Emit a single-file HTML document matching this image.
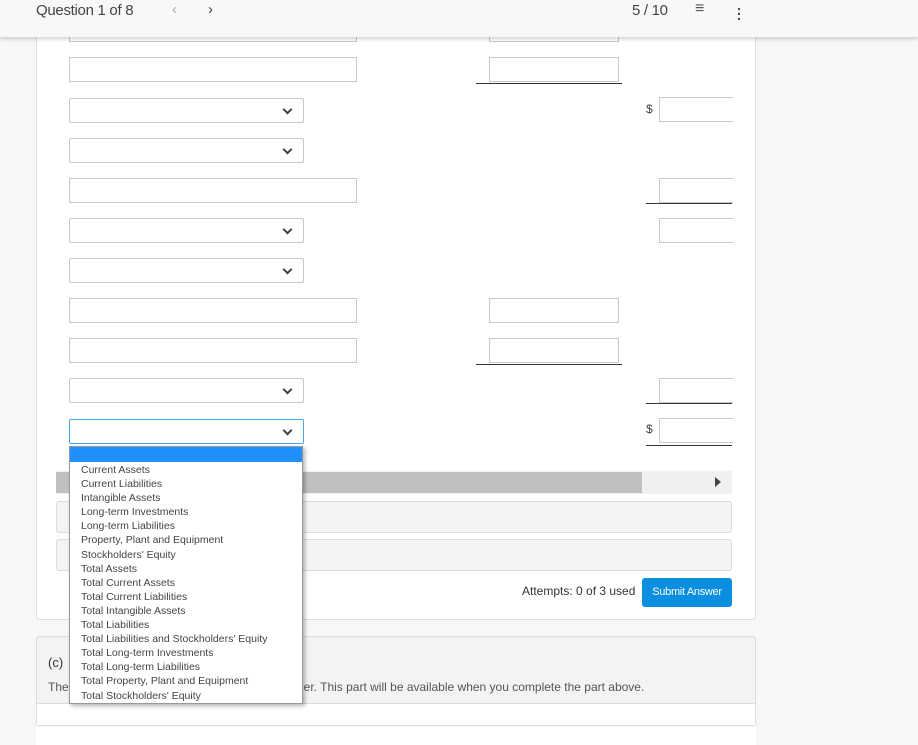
<!DOCTYPE html>
<html><head><meta charset="utf-8"><style>
*{box-sizing:border-box;margin:0;padding:0}
body{width:918px;height:745px;overflow:hidden;background:#f7f7f7;font-family:"Liberation Sans",sans-serif;position:relative;color:#333}
.a{position:absolute}
.hdr{left:0;top:0;width:918px;height:37px;background:#f8f8f8;box-shadow:0 2px 4px rgba(0,0,0,.18);z-index:5}
.card{left:36px;top:0;width:720px;height:620px;background:#fff;border:1px solid #ddd;border-top:none;border-radius:0 0 3px 3px}
.in{background:#fff;border:1px solid #c8c8c8;height:25px}
.sel{border-radius:2px}
.sel:after{content:"";position:absolute;right:12px;top:7px;width:5px;height:5px;border-right:2px solid #444;border-bottom:2px solid #444;transform:rotate(45deg)}
.ul{height:1px;background:#333}
.d{font-size:12px;color:#444}
.box{left:56px;width:676px;height:32px;background:#f4f4f4;border:1px solid #ddd;border-radius:3px}
.dd{left:69px;top:446px;width:234px;height:258px;background:#fff;border:1px solid #999;box-shadow:2px 2px 4px rgba(0,0,0,.3);z-index:6;font-size:10.5px;color:#444}
.dd div{height:14.1px;line-height:14px;padding-left:11px;white-space:nowrap}
</style></head><body>
<div class="a hdr">
<div class="a" style="left:36px;top:2px;font-size:15px;color:#444;letter-spacing:-.3px">Question 1 of 8</div>
<div class="a" style="left:172px;top:1px;font-size:15px;color:#aaa">&lsaquo;</div>
<div class="a" style="left:208px;top:1px;font-size:15px;color:#444">&rsaquo;</div>
<div class="a" style="left:632px;top:2px;font-size:15px;color:#444;letter-spacing:-.3px">5 / 10</div>
<div class="a" style="left:695px;top:0px;font-size:16px;color:#555">&#8801;</div>
<div class="a" style="left:737px;top:3px;font-size:14px;font-weight:bold;color:#444;line-height:5px">.<br>.<br>.</div>
</div>
<div class="a card"></div>
<div class="a in" style="left:69px;top:17px;width:288px"></div>
<div class="a in" style="left:69px;top:57px;width:288px"></div>
<div class="a in sel" style="left:69px;top:98px;width:235px"></div>
<div class="a in sel" style="left:69px;top:138px;width:235px"></div>
<div class="a in" style="left:69px;top:178px;width:288px"></div>
<div class="a in sel" style="left:69px;top:218px;width:235px"></div>
<div class="a in sel" style="left:69px;top:258px;width:235px"></div>
<div class="a in" style="left:69px;top:298px;width:288px"></div>
<div class="a in" style="left:69px;top:338px;width:288px"></div>
<div class="a in sel" style="left:69px;top:378px;width:235px"></div>
<div class="a in sel" style="left:69px;top:419px;width:235px;border-color:#4da3ea"></div>
<div class="a in" style="left:489px;top:17px;width:130px"></div>
<div class="a in" style="left:489px;top:57px;width:130px"></div>
<div class="a ul" style="left:476px;top:83px;width:146px"></div>
<div class="a d" style="left:646px;top:102px">$</div>
<div class="a in" style="left:659px;top:97px;width:80px"></div>
<div class="a in" style="left:659px;top:178px;width:80px"></div>
<div class="a ul" style="left:646px;top:203px;width:86px"></div>
<div class="a in" style="left:659px;top:218px;width:80px"></div>
<div class="a in" style="left:489px;top:298px;width:130px"></div>
<div class="a in" style="left:489px;top:338px;width:130px"></div>
<div class="a ul" style="left:476px;top:364px;width:146px"></div>
<div class="a in" style="left:659px;top:378px;width:80px"></div>
<div class="a ul" style="left:646px;top:403px;width:86px"></div>
<div class="a d" style="left:646px;top:422px">$</div>
<div class="a in" style="left:659px;top:418px;width:80px"></div>
<div class="a ul" style="left:646px;top:445px;width:86px"></div>
<div class="a" style="left:733px;top:0;width:22px;height:460px;background:#fff"></div>
<div class="a" style="left:56px;top:471px;width:676px;height:23px;background:#f0f0f0"></div>
<div class="a" style="left:56px;top:472px;width:586px;height:21px;background:#c0c0c0"></div>
<div class="a" style="left:715px;top:477px;width:0;height:0;border-left:6px solid #444;border-top:5px solid transparent;border-bottom:5px solid transparent"></div>
<div class="a box" style="top:501px"></div>
<div class="a box" style="top:539px"></div>
<div class="a" style="left:522px;top:584px;font-size:12px;color:#333">Attempts: 0 of 3 used</div>
<div class="a" style="left:642px;top:578px;width:90px;height:29px;background:#0a8ee0;border-radius:3px;color:#fff;font-size:11px;text-align:center;line-height:29px;letter-spacing:-.3px">Submit Answer</div>
<div class="a" style="left:36px;top:636px;width:720px;height:90px;background:#f3f3f3;border:1px solid #ddd;border-radius:3px"></div>
<div class="a" style="left:37px;top:703px;width:718px;height:22px;background:#fff;border-top:1px solid #ddd"></div>
<div class="a" style="left:48px;top:655px;font-size:13px;color:#333">(c)</div>
<div class="a" style="left:48px;top:680px;font-size:12px;color:#555">The</div>
<div class="a" style="left:293px;top:680px;font-size:12px;color:#555">rder. This part will be available when you complete the part above.</div>
<div class="a" style="left:36px;top:727px;width:720px;height:18px;background:#fff"></div>
<div class="a dd">
<div style="background:#1e90ff;height:15px"></div>
<div style="margin-top:1px">Current Assets</div><div>Current Liabilities</div><div>Intangible Assets</div><div>Long-term Investments</div><div>Long-term Liabilities</div><div>Property, Plant and Equipment</div><div>Stockholders' Equity</div><div>Total Assets</div><div>Total Current Assets</div><div>Total Current Liabilities</div><div>Total Intangible Assets</div><div>Total Liabilities</div><div>Total Liabilities and Stockholders' Equity</div><div>Total Long-term Investments</div><div>Total Long-term Liabilities</div><div>Total Property, Plant and Equipment</div><div>Total Stockholders' Equity</div>
</div>
</body></html>
